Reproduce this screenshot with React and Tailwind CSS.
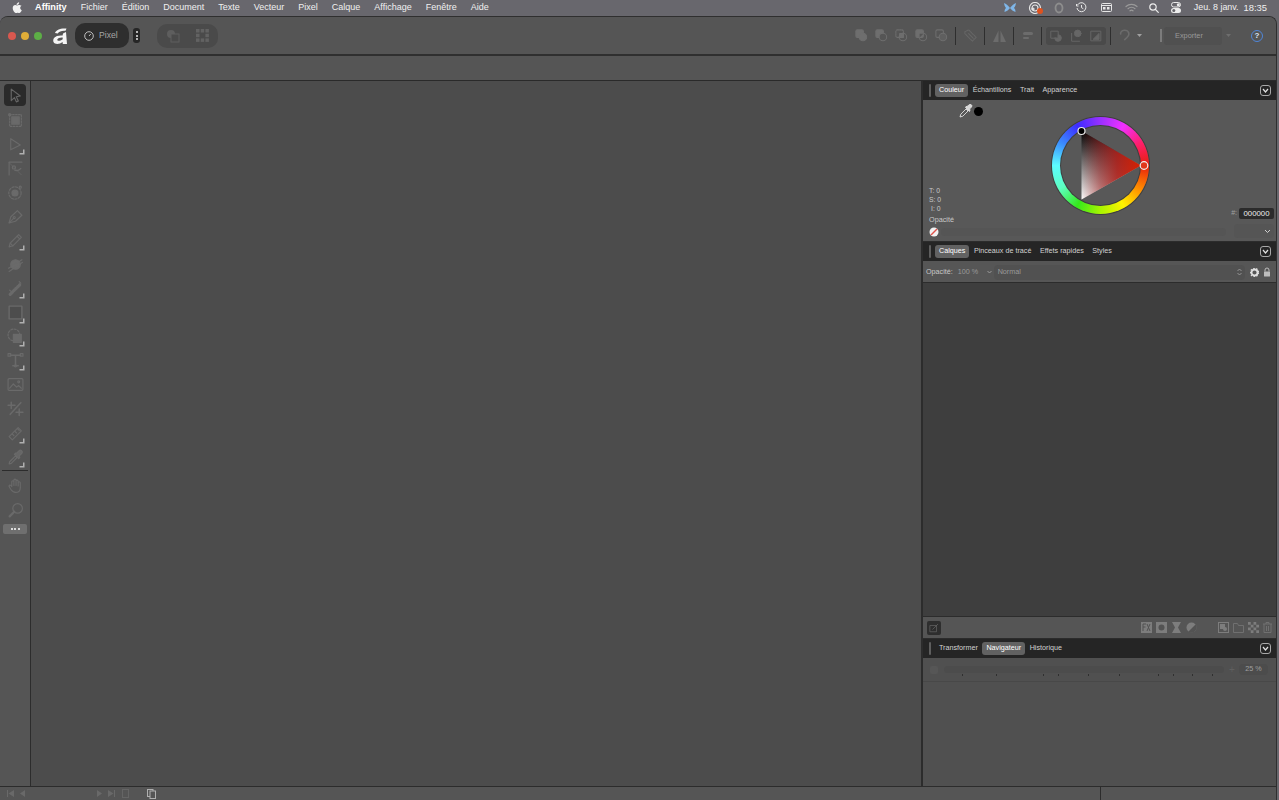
import React from 'react';

const FONT = "font-['Liberation_Sans','Inter',sans-serif]";

const menus = ['Fichier', 'Édition', 'Document', 'Texte', 'Vecteur', 'Pixel', 'Calque', 'Affichage', 'Fenêtre', 'Aide'];

// small outlined icon wrapper, all greyed out like the disabled toolbar
const Ico = ({ size = 16, color = '#6a6a6a', fill = 'none', sw = 1.1, children, className = '' }) => (
  <svg width={size} height={size} viewBox="0 0 16 16" fill={fill} stroke={color} strokeWidth={sw} strokeLinecap="round" strokeLinejoin="round" className={className}>
    {children}
  </svg>
);

const tools = [
  { h: 25, corner: false, el: <path d="M4 2 12.5 8.5 8.7 9.2 10.700 13.200 8.800 14 7 10 4 12.800Z" stroke="#666666" /> },
  { h: 24, corner: false, el: <><rect x="2.5" y="2.5" width="11" height="11" strokeDasharray="1.5 1.3" /><rect x="4.5" y="4.5" width="7" height="7" fill="#6a6a6a" /><circle cx="2.5" cy="2.5" r="1" /></> },
  { h: 24, corner: true, el: <path d="M3.5 2.5 12.5 8.5 3.5 13Z" /> },
  { h: 24, corner: false, el: <><path d="M2 14V2H14" /><path d="M2 2.500 13.500 14" strokeWidth="0.7" /><circle cx="6.500" cy="7" r="1.500" /><path d="M7 9.500c2 1 4 .5 6-1.500" /></> },
  { h: 24, corner: false, el: <><circle cx="7.500" cy="8.500" r="5.800" strokeDasharray="2 1.4" /><circle cx="7.500" cy="8.500" r="2.800" fill="#6a6a6a" /><circle cx="12.500" cy="3" r="1" /></> },
  { h: 25, corner: false, el: <><path d="M2 14 3.500 8.500 9.800 2.500 14 6.800 8 12.500Z" /><circle cx="6.800" cy="9" r="1" /><path d="M2 14 6 10" /></> },
  { h: 23, corner: true, el: <><path d="M2 14 3 10.500 11 2.500 13.500 5 5.500 13Z" /><path d="M3 10.500 5.500 13M9.500 4 12 6.500" /></> },
  { h: 24, corner: false, el: <><circle cx="8" cy="8" r="4.500" fill="#6a6a6a" /><path d="M1.500 11.500 14 3.500M2 14.500 14.500 6" /></> },
  { h: 24, corner: true, el: <><path d="M3 13.500 12 4.500" strokeWidth="3" strokeDasharray="1.4 1" /><path d="M11.500 1.500 13 3M2.500 9.500 4 11" /></> },
  { h: 25, corner: true, el: <rect x="2" y="2" width="12" height="12" fill="#4d4d4d" strokeWidth="1.3" /> },
  { h: 23, corner: true, el: <><circle cx="6.500" cy="6.500" r="5.500" strokeDasharray="1.8 1.4" /><rect x="6" y="6" width="7.500" height="7.500" fill="#6a6a6a" /></> },
  { h: 24, corner: true, el: <><path d="M3 3H13M8 3V13M5.500 13H10.500" strokeWidth="1.5" /><rect x="1" y="1.500" width="2.500" height="2.500" /><rect x="12.500" y="1.500" width="2.500" height="2.500" /><circle cx="8" cy="13" r="1" /></> },
  { h: 24, corner: false, el: <><rect x="1" y="2.500" width="14" height="11" rx="1" /><path d="m2.500 11.500 3.500-4 3 3 2-1.500 2.500 2.500" /><circle cx="11" cy="5.500" r="0.9" /></> },
  { h: 25, corner: false, el: <><path d="M1 5H7.500M4 2V8M8.500 11.500H15M11.500 8.500V14.500" strokeWidth="1.4" /><path d="M3 13.500 13 2.500" strokeWidth="1.4" /></> },
  { h: 24, corner: true, el: <><path d="M2 11 10.500 2.500 13.500 5.500 5 14Z" /><path d="M5 8.500 6.500 10M7.500 6 9 7.500M10 3.500 11.500 5" /></> },
  { h: 24, corner: true, el: <><path d="M2 14 2.500 12 8 6.500 9.500 8 4 13.500Z" /><path d="M7 5 11 9 12 8 11.500 6.500 14 4a1.800 1.800 0 0 0-2.500-2.500L9 4 8 3.800Z" fill="#666666" /></> },
];

const tools2 = [
  { h: 25, el: <path d="M4.500 9V4.500a1 1 0 0 1 2 0V8 3a1 1 0 0 1 2 0v5-4a1 1 0 0 1 2 0v4.500-3a1 1 0 0 1 2 0V10c0 3-2 4.500-4.500 4.500-2 0-3.200-1-4.500-3L2 9c-.5-1.500 1.500-2 2.500 0Z" /> },
  { h: 24, el: <><circle cx="10" cy="6" r="4.500" /><path d="M6.800 9.200 2.500 13.500" strokeWidth="2.2" /></> },
];

const ToolCell = ({ h, corner, active, children }) => (
  <div className={`relative flex w-[30px] items-center justify-center ${h === 25 ? 'h-[25px]' : h === 23 ? 'h-[23px]' : 'h-[24px]'}`}>
    {active && <div className="absolute left-1 top-[1px] h-[22px] w-[22px] rounded-[4px] bg-[#2a2a2a]" />}
    <Ico size={17} className="relative">{children}</Ico>
    {corner && (
      <svg width="6" height="6" viewBox="0 0 6 6" className="absolute bottom-[1px] right-[5px]">
        <path d="M5.500 0.500V5.500H0.500V4H4V0.500Z" fill="#b0b0b0" />
      </svg>
    )}
  </div>
);

const Grip = () => <div className="ml-[6px] mr-[4px] h-[13px] w-[2px] rounded-sm bg-[#5e5e5e]" />;

const PanelTabs = ({ tabs, active }) => (
  <div className="flex h-[19px] shrink-0 items-center bg-[#252525] pr-[5px]">
    <Grip />
    <div className="flex flex-1 items-center gap-[0.5px]">
      {tabs.map((t) => (
        <div key={t} className={`rounded-[3px] px-[4px] pb-[1.5px] pt-[1px] text-[7.2px] leading-[10px] ${t === active ? 'bg-[#626262] text-white' : 'text-[#d2d2d2]'}`}>
          {t}
        </div>
      ))}
    </div>
    <div className="flex h-[11px] w-[11px] items-center justify-center rounded-[3px] border border-[#a8a8a8]">
      <svg width="7" height="7" viewBox="0 0 7 7" fill="none" stroke="#e0e0e0" strokeWidth="1.2"><path d="M1 2l2.500 3L6 2" /></svg>
    </div>
  </div>
);

const ColourWheel = () => (
  <div className="relative h-[97px] w-[97px] rounded-full bg-[conic-gradient(from_90deg,#e8200c,#ff8a00,#fff200,#a8f500,#35e81c,#5dffc0,#5cfcff,#3a8cff,#3d2cff,#9a30ff,#f030ff,#ff1f6e,#e8200c)] shadow-[0_0_0_1px_#3f3f3f]">
    <div className="absolute inset-[9px] rounded-full bg-[#585858] shadow-[0_0_0_1px_#3f3f3f]" />
    <svg width="97" height="97" viewBox="0 0 97 97" className="absolute inset-0 overflow-visible">
      <defs>
        <linearGradient id="bw" x1="0" y1="0" x2="0" y2="1">
          <stop offset="0" stopColor="#000" />
          <stop offset="1" stopColor="#fff" />
        </linearGradient>
        <linearGradient id="hue" x1="0" y1="0" x2="1" y2="0">
          <stop offset="0" stopColor="#a01818" stopOpacity="0" />
          <stop offset="0.3" stopColor="#a01818" stopOpacity="0.5" />
          <stop offset="0.6" stopColor="#b01a14" stopOpacity="0.85" />
          <stop offset="1" stopColor="#d92000" stopOpacity="1" />
        </linearGradient>
      </defs>
      <polygon points="29.500,14 89,48.500 29.500,82.500" fill="url(#bw)" />
      <polygon points="29.500,14 89,48.500 29.500,82.500" fill="url(#hue)" />
      <circle cx="29.500" cy="14" r="3.500" fill="#000" stroke="#e8e8e8" strokeWidth="1.2" />
      <circle cx="92" cy="48.500" r="3.800" fill="#e0381c" stroke="#f0f0f0" strokeWidth="1.2" />
    </svg>
  </div>
);

const ToolbarIcons = () => (
  <div className="flex items-center">
    {[
      <><rect x="2" y="2" width="8" height="8" rx="1.5" fill="#6e6e6e" /><circle cx="9.5" cy="9.5" r="4" fill="#6e6e6e" /></>,
      <><rect x="2" y="2" width="8" height="8" rx="1.5" fill="#6e6e6e" /><circle cx="9.5" cy="9.5" r="4" fill="#555555" /></>,
      <><rect x="2" y="2" width="8" height="8" rx="1.5" strokeDasharray="1.5 1" /><circle cx="9.5" cy="9.5" r="4" /><path d="M6 6h4v4H6Z" fill="#6e6e6e" /></>,
      <><rect x="2" y="2" width="8" height="8" rx="1.5" fill="#6e6e6e" /><circle cx="9.5" cy="9.5" r="4" /><path d="M6 10V6h4Z" fill="#555555" stroke="none" /></>,
      <><rect x="2" y="2" width="8" height="8" rx="1.5" /><circle cx="9.5" cy="9.5" r="4" fill="#5f5f5f" /></>,
    ].map((el, i) => (
      <div key={i} className="flex w-[20px] justify-center"><Ico size={15} color="#6e6e6e">{el}</Ico></div>
    ))}
  </div>
);

const Sep = () => <div className="h-[18px] w-[1px] bg-[#2e2e2e]" />;

export default function App() {
  return (
    <div className={`flex h-[800px] w-[1279px] flex-col overflow-hidden bg-[#68676d] text-[#e6e6e6] opacity-[0.995] ${FONT}`}>
      {/* mac menu bar */}
      <div className="flex h-[16px] shrink-0 items-center pb-[1px] text-[9px] leading-none text-[#f0f0f0]">
        <svg width="10" height="11" viewBox="0 0 16 18" fill="#f2f2f2" className="ml-[12px] mr-[13px]">
          <path d="M11.500 0.500c.1 1.200-.4 2.300-1.100 3.100-.8.900-1.900 1.500-3 1.400-.2-1.100.4-2.300 1.100-3C9.300 1 10.500.5 11.500.5ZM15.400 6.300c-1.600 1-2.100 2.100-2.100 3.500 0 1.700 1 2.900 2.500 3.500-.4 1.200-1 2.300-1.700 3.200-.7.900-1.400 1.500-2.400 1.500-1.100 0-1.500-.6-2.800-.6-1.300 0-1.800.6-2.800.6-1 0-1.700-.7-2.500-1.700C2.300 15.200 1 12.500 1 10c0-3.100 2-5 4.100-5 1.200 0 2.100.8 2.900.8.800 0 1.800-.9 3.200-.9 1 0 2.800.4 4.200 1.400Z" />
        </svg>
        <span className="mr-[14px] text-[9.2px] font-bold text-white">Affinity</span>
        <div className="flex gap-[14px]">
          {menus.map((m) => <span key={m}>{m}</span>)}
        </div>
        <div className="ml-auto flex items-center pr-[12px]">
          <svg width="12" height="10" viewBox="0 0 12 10" className="mr-[12px]"><path d="M0 0c2 .5 4 2.500 6 5 2-2.500 4-4.500 6-5-.3 2-1 4-2 5 1 .8 1.500 2 1.500 4C9 8 7.500 7 6 5 4.500 7 3 8 .5 9 .5 7 1 5.800 2 5 1 4 .3 2 0 0Z" fill="#7fb6e8" /></svg>
          <div className="relative mr-[12px] h-[12px] w-[14px]">
            <svg width="14" height="12" viewBox="0 0 14 12" fill="none" stroke="#e6e6e6" strokeWidth="1.2"><circle cx="7" cy="6" r="5.500" /><circle cx="7" cy="6" r="3" /><circle cx="5" cy="7" r="1" /></svg>
            <div className="absolute bottom-0 right-[-1px] h-[6px] w-[6px] rounded-full bg-[#e0521e]" />
          </div>
          <svg width="10" height="12" viewBox="0 0 10 12" fill="none" stroke="#8d8d8d" strokeWidth="1.8" className="mr-[12.5px]"><ellipse cx="5" cy="6" rx="3.500" ry="4.500" /></svg>
          <svg width="11" height="11" viewBox="0 0 11 11" fill="none" stroke="#e6e6e6" strokeWidth="1" className="mr-[14px]"><path d="M1.500 3A4.500 4.500 0 1 1 1 6" /><path d="M5.500 3v2.700l1.800 1" /><path d="M.5 2v2h2" /></svg>
          <svg width="11" height="9" viewBox="0 0 11 9" fill="none" stroke="#e6e6e6" strokeWidth="1" className="mr-[13px]"><rect x="0.500" y="0.500" width="10" height="8" rx="1" /><path d="M0.500 2.500h10" /><rect x="2" y="4" width="2.500" height="2.500" fill="#e6e6e6" stroke="none" /><rect x="6" y="4" width="2.500" height="2.500" fill="#e6e6e6" stroke="none" /></svg>
          <svg width="13" height="10" viewBox="0 0 13 10" fill="none" stroke="#9a9a9a" strokeWidth="1.2" strokeLinecap="round" className="mr-[10.5px]"><path d="M1 3.500a8 8 0 0 1 11 0M3 5.700a5 5 0 0 1 7 0M5 7.800a2.200 2.200 0 0 1 3 0" /></svg>
          <svg width="10" height="10" viewBox="0 0 10 10" fill="none" stroke="#ececec" strokeWidth="1.2" strokeLinecap="round" className="mr-[12px]"><circle cx="4" cy="4" r="3.200" /><path d="M6.500 6.500 9.300 9.300" /></svg>
          <svg width="10" height="11" viewBox="0 0 10 11" className="mr-[13px]"><rect x="0.500" y="0.500" width="9" height="4.500" rx="2.200" fill="none" stroke="#ececec" /><circle cx="7.300" cy="2.700" r="1.500" fill="#ececec" /><rect x="0" y="6" width="10" height="5" rx="2.500" fill="#ececec" /><circle cx="2.800" cy="8.500" r="1.500" fill="#646369" /></svg>
          <span className="mr-[5px] text-[8.9px]">Jeu. 8 janv.</span>
          <span className="text-[9.4px]">18:35</span>
        </div>
      </div>

      {/* application window */}
      <div className="mr-[2px] flex min-h-0 flex-1 flex-col overflow-hidden rounded-t-[8px] border-r border-t border-[#2f2f2f] bg-[#555555]">
        <div className="flex h-[39px] shrink-0 items-center border-b-2 border-[#2f2f2f] bg-[#555555]">
          <div className="ml-[8px] flex gap-[5px]">
            <div className="h-[8px] w-[8px] rounded-full bg-[#d9584f]" />
            <div className="h-[8px] w-[8px] rounded-full bg-[#e0ad38]" />
            <div className="h-[8px] w-[8px] rounded-full bg-[#5dae46]" />
          </div>
          <svg width="14" height="16" viewBox="0 0 14 16" className="ml-[11px]"><path d="M2 5C3 2 7 0 13.500 0.500L12.500 2.800C9 2.500 6 3.200 4.800 5.500ZM13 4 14 16H9.800L9.600 14C7.500 15.800 4 16.500 2 15.500 0 14.500-.3 12 1 10 2.800 7.800 6 7.200 9.600 7.500L10 5.500ZM9.700 9.500C7 9.300 4.800 10 4.300 11.500 4 13 6.500 13.500 9.700 11.300Z" fill="#f5f5f5" /></svg>
          <div className="ml-[8px] flex h-[25px] w-[54px] items-center rounded-[10px] bg-[#2e2e2e] pl-[9px]">
            <svg width="10" height="10" viewBox="0 0 10 10" fill="none" stroke="#cfcfcf" strokeWidth="0.9"><circle cx="5" cy="5" r="4.300" /><path d="M5 5 6.800 3" /></svg>
            <span className="ml-[5px] text-[8.6px] leading-none text-[#a6a6a6]">Pixel</span>
          </div>
          <div className="ml-[4px] flex h-[15px] w-[7px] flex-col items-center justify-center gap-[1.5px] rounded-[3px] bg-[#262626]">
            <div className="h-[2px] w-[2px] rounded-full bg-[#e6e6e6]" />
            <div className="h-[2px] w-[2px] rounded-full bg-[#e6e6e6]" />
            <div className="h-[2px] w-[2px] rounded-full bg-[#e6e6e6]" />
          </div>
          <div className="ml-[17px] flex h-[24px] w-[61px] items-center justify-between rounded-[10px] bg-[#4a4a4a] px-[9px]">
            <svg width="14" height="14" viewBox="0 0 14 14"><circle cx="5" cy="5" r="4" fill="#5e5e5e" /><rect x="5" y="5" width="8" height="8" fill="#4a4a4a" stroke="#5e5e5e" /></svg>
            <svg width="13" height="13" viewBox="0 0 13 13" fill="#626262"><rect x="0" y="0" width="3.500" height="3.500" /><rect x="4.700" y="0" width="3.500" height="3.500" /><rect x="9.400" y="0" width="3.500" height="3.500" /><rect x="0" y="4.700" width="3.500" height="3.500" /><rect x="9.400" y="4.700" width="3.500" height="3.500" /><rect x="0" y="9.400" width="3.500" height="3.500" /><rect x="4.700" y="9.400" width="3.500" height="3.500" /><rect x="9.400" y="9.400" width="3.500" height="3.500" /></svg>
          </div>

          <div className="ml-auto flex items-center pr-[13px]">
            <ToolbarIcons />
            <div className="ml-[4px]"><Sep /></div>
            <div className="flex w-[28px] justify-center"><Ico size={15} color="#676767"><path d="M2 4 6 2 14 10 10 14 2 6Z" strokeDasharray="1.5 1" /><path d="M6 6 11 11" /></Ico></div>
            <Sep />
            <div className="flex w-[28px] justify-center"><svg width="13" height="12" viewBox="0 0 13 12" fill="#6c6c6c"><path d="M5.500 0.500V12H0ZM7.500 0.500 13 12H7.500Z" /></svg></div>
            <Sep />
            <div className="flex w-[27px] flex-col items-center gap-[2px]">
              <div className="h-[2.5px] w-[10px] rounded-sm bg-[#6c6c6c]" />
              <div className="h-[2.5px] w-[6px] -translate-x-[2px] rounded-sm bg-[#6c6c6c]" />
            </div>
            <Sep />
            <div className="mx-[4px] flex h-[18px] w-[60px] items-center justify-around rounded-[3px] bg-[#4a4a4a]">
              <Ico size={14} color="#666666"><rect x="2.5" y="2.5" width="8" height="8" /><path d="M6.500 10.500a3.800 3.800 0 1 0 4-4V10.500Z" fill="#666666" /></Ico>
              <Ico size={14} color="#666666"><path d="M3 5V14H12" /><circle cx="10" cy="5" r="3.800" fill="#666666" /></Ico>
              <Ico size={14} color="#666666"><rect x="2.5" y="2.5" width="11" height="11" /><path d="M5 11.500 11.500 5V11.500Z" fill="#666666" /></Ico>
            </div>
            <Sep />
            <div className="ml-[8px] flex items-center gap-[5px]">
              <Ico size={13} color="#6c6c6c" sw={2}><path d="M2 6a5 4 0 0 1 10-1c1 2-1.500 5-5 8" /></Ico>
              <svg width="5" height="3" viewBox="0 0 5 3" fill="#a0a0a0"><path d="M0 0h5L2.500 3Z" /></svg>
            </div>
            <div className="ml-[18px] h-[13px] w-[2px] bg-[#7c7c7c]" />
            <div className="ml-[2px] flex h-[18px] w-[58px] items-center rounded-[3px] bg-[#505050] pl-[11px] text-[7.4px] text-[#999999]">Exporter</div>
            <svg width="5" height="3" viewBox="0 0 5 3" fill="#6e6e6e" className="ml-[3.5px]"><path d="M0 0h5L2.500 3Z" /></svg>
            <div className="ml-[20.5px] flex h-[12px] w-[12px] items-center justify-center rounded-full border border-[#4f86d9] text-[8px] font-bold leading-none text-[#d8e4f5]">?</div>
          </div>
        </div>

        {/* context toolbar */}
        <div className="h-[25px] shrink-0 border-b border-[#2a2a2a] bg-[#555555]" />

        <div className="flex min-h-0 flex-1">
          {/* tools */}
          <div className="flex w-[31px] shrink-0 flex-col border-r border-[#2c2c2c] bg-[#555555] pt-[2px]">
            {tools.map((t, i) => (
              <ToolCell key={i} h={t.h} corner={t.corner} active={i === 0}>{t.el}</ToolCell>
            ))}
            <div className="mx-[2px] mb-[2px] mt-[1px] h-[1px] bg-[#2c2c2c]" />
            {tools2.map((t, i) => (
              <ToolCell key={i} h={t.h}>{t.el}</ToolCell>
            ))}
            <div className="mx-[3px] mt-[2px] flex h-[10px] items-center justify-center gap-[1.5px] rounded-[2px] bg-[#6f6f6f]">
              <div className="h-[2px] w-[2px] rounded-full bg-white" />
              <div className="h-[2px] w-[2px] rounded-full bg-white" />
              <div className="h-[2px] w-[2px] rounded-full bg-white" />
            </div>
          </div>

          {/* canvas */}
          <div className="min-w-0 flex-1 bg-[#4c4c4c]" />

          {/* studio panels */}
          <div className="flex w-[355px] shrink-0 flex-col border-l-2 border-[#2c2c2c] bg-[#585858] text-[#cfcfcf]">
            <PanelTabs tabs={['Couleur', 'Échantillons', 'Trait', 'Apparence']} active="Couleur" />
            <div className="relative h-[142px] shrink-0 border-b border-[#2c2c2c] bg-[#585858]">
              <div className="flex justify-center pl-[1px] pt-[17px]"><ColourWheel /></div>
              <div className="absolute left-[36px] top-[4px] flex items-center gap-[1px]">
                <svg width="14" height="14" viewBox="0 0 14 14" fill="none" stroke="#e0e0e0" strokeWidth="0.9"><path d="M1 13 1.800 10.200 7 5l2 2-5.200 5.200Z" /><path d="M6.500 3.500l4 4 .5-1.500-.5-1 2-2a1.500 1.500 0 0 0-2.500-2L8 2.500 7 2.500Z" fill="#d8d8d8" /></svg>
                <div className="h-[9px] w-[9px] rounded-full bg-black" />
              </div>
              <div className="absolute left-[6px] top-[86px] flex flex-col text-[6.8px] leading-[9px] text-[#c8c8c8]">
                <span>T: 0</span><span>S: 0</span><span className="pl-[2px]">I: 0</span>
              </div>
              <span className="absolute left-[6px] top-[115px] text-[7.25px] leading-[10px] text-[#c8c8c8]">Opacité</span>
              <svg width="10" height="10" viewBox="0 0 10 10" className="absolute left-[6px] top-[127px]"><circle cx="5" cy="5" r="4.500" fill="#f2f2f2" /><path d="M2 8 8 2" stroke="#e0524a" strokeWidth="1.5" /></svg>
              <div className="absolute left-[18px] top-[128px] h-[8px] w-[285px] rounded-sm bg-[#555555]" />
              <div className="absolute right-[2px] top-[124px] flex h-[14px] w-[40px] items-center justify-end rounded-sm bg-[#555555] pr-[3px]">
                <svg width="7" height="5" viewBox="0 0 7 5" fill="none" stroke="#cfcfcf" strokeWidth="1"><path d="M1 1l2.500 2.500L6 1" /></svg>
              </div>
              <div className="absolute right-[2px] top-[108px] flex items-center gap-[2px]">
                <span className="text-[7px] text-[#a0a0a0]">#:</span>
                <div className="flex h-[11px] w-[35px] items-center justify-center rounded-[2px] bg-[#2b2b2b] text-[7.8px] text-[#eeeeee]">000000</div>
              </div>
            </div>

            <PanelTabs tabs={['Calques', 'Pinceaux de tracé', 'Effets rapides', 'Styles']} active="Calques" />
            <div className="flex h-[22px] shrink-0 items-center border-b border-[#2c2c2c] bg-[#565656] pl-[3px] pr-[5px] pt-[1px] text-[7.2px]">
              <span className="text-[#c8c8c8]">Opacité:</span>
              <span className="ml-[5px] text-[#9a9a9a]">100 %</span>
              <svg width="5" height="4" viewBox="0 0 5 4" fill="none" stroke="#9a9a9a" className="ml-[9px]"><path d="M.5 1l2 2 2-2" /></svg>
              <div className="ml-[1.5px] flex h-[15px] flex-1 items-center justify-between rounded-sm bg-[#515151] pl-[4px] pr-[3px]">
                <span className="text-[#9a9a9a]">Normal</span>
                <svg width="5" height="8" viewBox="0 0 5 8" fill="none" stroke="#a5a5a5" strokeWidth="0.8"><path d="M.5 3l2-2 2 2M.5 5l2 2 2-2" /></svg>
              </div>
              <svg width="9" height="9" viewBox="0 0 9 9" className="ml-[5px]"><circle cx="4.500" cy="4.500" r="3" fill="none" stroke="#e0e0e0" strokeWidth="1.8" /><circle cx="4.500" cy="4.500" r="4.200" fill="none" stroke="#e0e0e0" strokeWidth="1.2" strokeDasharray="1.5 1.5" /></svg>
              <svg width="8" height="10" viewBox="0 0 8 10" className="ml-[4.5px]"><path d="M2 4.500V3a2 2 0 0 1 4 0v1.500" fill="none" stroke="#bdbdbd" /><rect x="1" y="4.500" width="6" height="5" rx="0.5" fill="#bdbdbd" /></svg>
            </div>
            <div className="min-h-0 flex-1 bg-[#3e3e3e]" />
            <div className="flex h-[23px] shrink-0 items-center border-y border-[#2c2c2c] bg-[#555555] pl-[4px] pr-[4px]">
              <div className="flex h-[14px] w-[14px] items-center justify-center rounded-[2px] bg-[#2e2e2e]">
                <Ico size={10} color="#666666"><rect x="2" y="4" width="10" height="10" /><path d="M6 10 14 2" /></Ico>
              </div>
              <div className="ml-auto flex items-center gap-[4px]">
                <svg width="11" height="11" viewBox="0 0 11 11"><rect width="11" height="11" fill="#7d7d7d" /><path d="M2 9V2h3M2 5h2.500M6 2l3 7M9 2 6 9" stroke="#535353" fill="none" /></svg>
                <svg width="11" height="11" viewBox="0 0 11 11"><rect width="11" height="11" fill="#7d7d7d" /><circle cx="5.500" cy="5.500" r="3" fill="#535353" /></svg>
                <svg width="11" height="11" viewBox="0 0 11 11" fill="#7d7d7d"><path d="M1 0h9L7 5.500 10 11H1l3-5.500Z" /></svg>
                <svg width="11" height="11" viewBox="0 0 11 11"><circle cx="5.500" cy="5.500" r="5" fill="#7d7d7d" /><path d="M2.500 9.500 9.500 2.500A5 5 0 0 1 2.500 9.500Z" fill="#535353" /></svg>
              </div>
              <div className="ml-[21px] flex items-center gap-[4px]">
                <svg width="11" height="11" viewBox="0 0 11 11"><rect x="0.500" y="0.500" width="10" height="10" fill="none" stroke="#7d7d7d" /><rect x="2" y="2" width="5" height="5" fill="#7d7d7d" /><circle cx="7" cy="7" r="2" fill="#7d7d7d" /></svg>
                <svg width="11" height="10" viewBox="0 0 11 10" fill="none" stroke="#707070"><path d="M.5 9.500V.5h4l1 2h5v7Z" /></svg>
                <svg width="11" height="11" viewBox="0 0 11 11" fill="#7d7d7d"><path d="M0 0h2.750v2.750H0ZM5.500 0h2.750v2.750H5.500ZM2.750 2.750H5.500V5.500H2.750ZM8.250 2.750H11V5.500H8.250ZM0 5.500h2.750v2.750H0ZM5.500 5.500h2.750v2.750H5.500ZM2.750 8.250H5.500V11H2.750ZM8.250 8.250H11V11H8.250Z" /></svg>
                <svg width="9" height="11" viewBox="0 0 9 11" fill="none" stroke="#707070"><path d="M0 2h9M3 2V.5h3V2M1 2v8.500h7V2M3.500 4v5M5.500 4v5" /></svg>
              </div>
            </div>
            <PanelTabs tabs={['Transformer', 'Navigateur', 'Historique']} active="Navigateur" />
            <div className="flex h-[128px] shrink-0 flex-col bg-[#505050]">
              <div className="flex h-[24px] items-center border-b border-[#484848] pl-[7px] pr-[4px]">
                <div className="h-[8px] w-[8px] rounded-[2px] bg-[#565656]" />
                <div className="relative ml-[6px] h-[7px] w-[280px] rounded-sm bg-[#4c4c4c]">
                  <svg width="280" height="4" viewBox="0 0 280 4" className="absolute left-0 top-[8px]" fill="#2f2f2f">
                    {[18, 52, 99, 114, 144, 175, 214, 229, 248, 268].map((x) => <rect key={x} x={x} y="0" width="1" height="2" />)}
                  </svg>
                </div>
                <span className="ml-[5px] text-[10px] leading-none text-[#5f5f5f]">+</span>
                <div className="ml-[4px] flex h-[11px] w-[29px] items-center justify-center rounded-sm bg-[#4c4c4c] text-[7.2px] text-[#a0a0a0]">25 %</div>
              </div>
            </div>
          </div>
        </div>

        {/* status bar */}
        <div className="flex h-[14px] shrink-0 items-center border-t border-[#2c2c2c] bg-[#555555] pl-[7px]">
          <svg width="7" height="7" viewBox="0 0 7 7" fill="#696969"><path d="M0 0h1v7H0ZM7 0v7L1.500 3.500Z" /></svg>
          <svg width="5" height="7" viewBox="0 0 5 7" fill="#696969" className="ml-[6px]"><path d="M5 0v7L0 3.500Z" /></svg>
          <svg width="5" height="7" viewBox="0 0 5 7" fill="#696969" className="ml-[72px]"><path d="M0 0v7l5-3.500Z" /></svg>
          <svg width="7" height="7" viewBox="0 0 7 7" fill="#696969" className="ml-[6px]"><path d="M0 0v7l5.500-3.500ZM6 0h1v7H6Z" /></svg>
          <svg width="7" height="9" viewBox="0 0 7 9" fill="none" stroke="#656565" className="ml-[7px]"><rect x="0.500" y="0.500" width="6" height="8" /></svg>
          <svg width="9" height="10" viewBox="0 0 9 10" fill="none" stroke="#b0b0b0" className="ml-[18px]"><rect x="0.500" y="0.500" width="5.500" height="7" /><rect x="3" y="2" width="5.500" height="7.500" fill="#555555" /></svg>
          <div className="ml-auto h-full w-[176px] border-l border-[#2c2c2c]" />
        </div>
      </div>
    </div>
  );
}
